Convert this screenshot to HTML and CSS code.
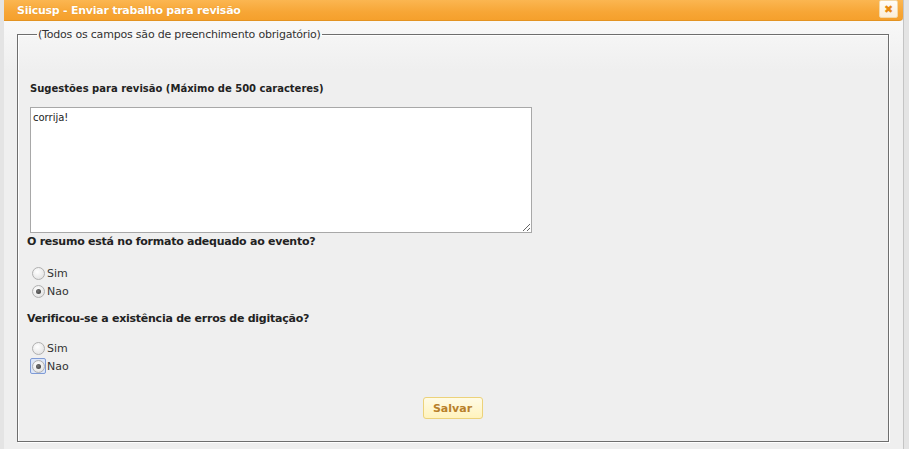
FILE: index.html
```html
<!DOCTYPE html>
<html lang="pt-BR">
<head>
    <meta charset="UTF-8">
    <title>Siicusp - Enviar trabalho para revisão</title>
    <link rel="stylesheet" href="styles.css">
</head>
<body>
    <div class="dialog">
        <div class="dialog-title">
            <span class="title-text">Siicusp - Enviar trabalho para revisão</span>
            <a href="#" class="close-btn">&#10006;</a>
        </div>

        <div class="dialog-body">
            <form class="review-form">
                <fieldset>
                    <legend>(Todos os campos são de preenchimento obrigatório)</legend>

                    <div class="field">
                        <label for="sugestoes" class="field-label">Sugestões para revisão (Máximo de 500 caracteres)</label>
                        <textarea id="sugestoes" maxlength="500">corrija!</textarea>
                    </div>

                    <div class="question">
                        <div class="question-title">O resumo está no formato adequado ao evento?</div>
                        <label class="option"><span class="radio-wrap"><input type="radio" name="formato" value="sim"></span> Sim</label>
                        <label class="option"><span class="radio-wrap"><input type="radio" name="formato" value="nao" checked></span> Nao</label>
                    </div>

                    <div class="question">
                        <div class="question-title">Verificou-se a existência de erros de digitação?</div>
                        <label class="option"><span class="radio-wrap"><input type="radio" name="erros" value="sim"></span> Sim</label>
                        <label class="option"><span class="radio-wrap focused"><input type="radio" name="erros" value="nao" checked></span> Nao</label>
                    </div>

                    <div class="actions">
                        <button type="button" class="save-btn">Salvar</button>
                    </div>
                </fieldset>
            </form>
        </div>
    </div>
</body>
</html>
```

FILE: styles.css
```css
* { margin: 0; padding: 0; box-sizing: border-box; }

body {
    font-family: "DejaVu Sans", Verdana, sans-serif;
    font-size: 11px;
    color: #222;
    background: #e4e4e4;
    height: 449px;
    overflow: hidden;
    padding-left: 4px;
    padding-right: 5px;
}

.dialog {
    height: 449px;
    background: #efefef;
    border-right: 1px solid #c4c4c4;
    display: flex;
    flex-direction: column;
}

.dialog-title {
    height: 21px;
    background: linear-gradient(to bottom, #fbb651, #f7a636 60%, #f5a02c);
    border-bottom: 1px solid #e39322;
    border-radius: 0 0 4px 0;
    display: flex;
    align-items: center;
    justify-content: space-between;
    padding: 0 5px 0 13px;
}

.title-text {
    color: #fff;
    font-weight: bold;
    font-size: 11px;
    letter-spacing: -0.25px;
    text-shadow: 0 0 1px #e08a10;
}

.close-btn {
    width: 19px;
    height: 18px;
    margin-top: -2px;
    background: linear-gradient(to bottom, #fffdf8, #fbeed8);
    border: 1px solid #f3d8a8;
    border-radius: 2px;
    color: #e88a10;
    font-size: 11px;
    font-weight: bold;
    text-decoration: none;
    display: flex;
    align-items: center;
    justify-content: center;
}

.dialog-body {
    flex: 1;
    background: linear-gradient(to bottom, #f8f8f8, #efefef 50px);
    padding: 7px 14px 7px 13px;
}

.review-form {
    height: 100%;
}

fieldset {
    height: 100%;
    border: 1px solid #6e6e6e;
    box-shadow: 1px 1px 0 #fff, inset 1px 1px 0 #fff;
    padding: 42px 10px 0 9px;
}

legend {
    color: #333;
    font-size: 11px;
    margin-left: 10px;
    padding: 0 1px 0 1px;
    letter-spacing: -0.2px;
}

.field {
    padding-left: 3px;
}

.field-label {
    display: block;
    font-weight: bold;
    font-size: 10px;
    color: #222;
    margin-bottom: 13px;
}

textarea {
    display: block;
    width: 502px;
    height: 126px;
    border: 1px solid #a8a8a8;
    background: #fff;
    padding: 4px 2px;
    font-family: "DejaVu Sans", Verdana, sans-serif;
    font-size: 10px;
    color: #222;
    resize: both;
}

.question {
    margin-top: 2px;
}

.question + .question {
    margin-top: 12px;
}

.question-title {
    font-weight: bold;
    font-size: 11px;
    letter-spacing: -0.25px;
    color: #222;
    margin-bottom: 16px;
}

.question + .question .question-title {
    margin-bottom: 14px;
}

.option {
    display: flex;
    align-items: center;
    height: 18px;
    color: #333;
    font-size: 11px;
}

.radio-wrap {
    display: flex;
    align-items: center;
    justify-content: center;
    width: 16px;
    height: 16px;
    margin: 0 1px 0 3px;
    border: 1px solid transparent;
    border-radius: 2px;
}

.radio-wrap.focused {
    border-color: #7f9bd6;
    background: #dce6f8;
}

.option input {
    appearance: none;
    width: 13px;
    height: 13px;
    border: 1px solid #b0b0b0;
    border-radius: 50%;
    background: radial-gradient(circle at 40% 35%, #ffffff, #dcdcdc);
    position: relative;
}

.option input:checked::after {
    content: "";
    position: absolute;
    left: 3px;
    top: 3px;
    width: 5px;
    height: 5px;
    border-radius: 50%;
    background: radial-gradient(circle at 40% 40%, #777, #333);
}

.actions {
    display: flex;
    justify-content: center;
    margin-top: 22px;
}

.save-btn {
    width: 60px;
    height: 22px;
    background: linear-gradient(to bottom, #fffbe6, #fff3bd);
    border: 1px solid #ecd27a;
    border-radius: 3px;
    color: #b8802a;
    font-family: "DejaVu Sans", Verdana, sans-serif;
    font-size: 11px;
    font-weight: bold;
    cursor: pointer;
}
```
